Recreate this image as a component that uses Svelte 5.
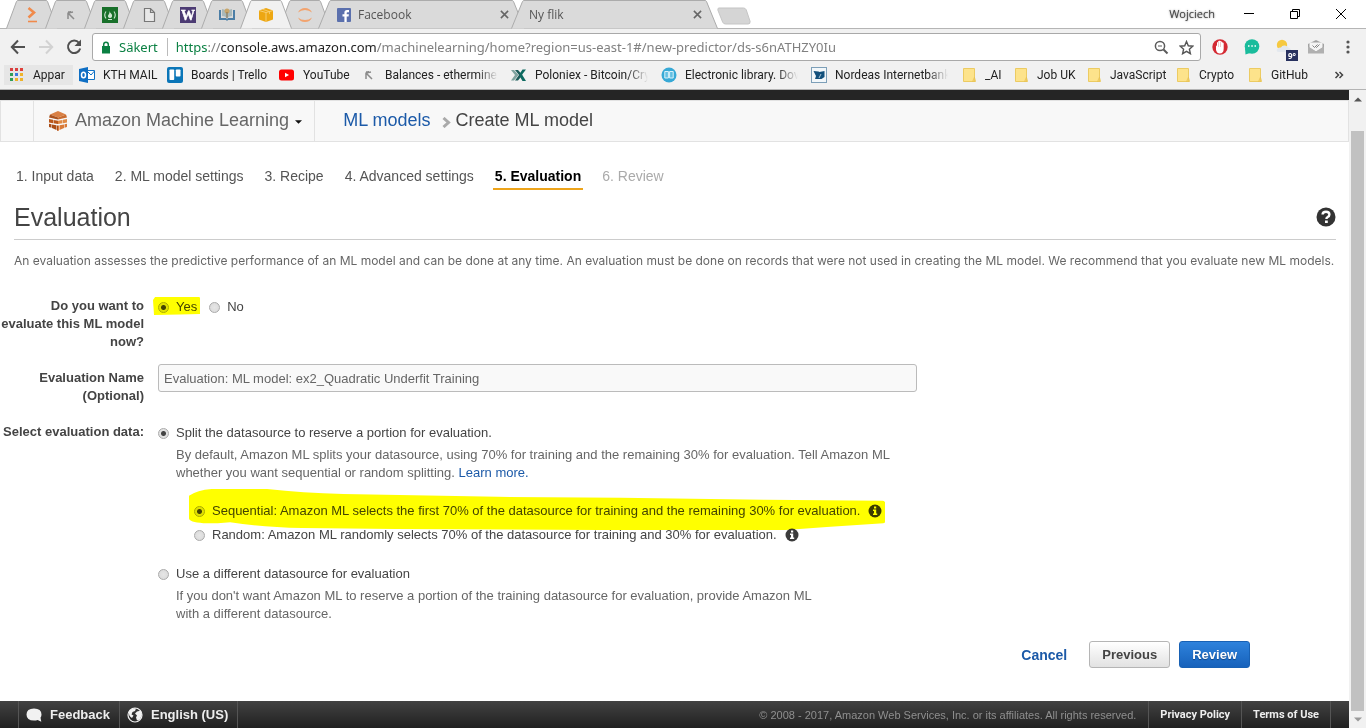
<script>
  const slimTabs = ['prompt', 'pick', 'fcc', 'page', 'w', 'book', 'aws', 'ring'];
  const wideTabs = [
    { title: 'Facebook', icon: 'fb' },
    { title: 'Ny flik', icon: null }
  ];
  const bookmarks = [
    { label: 'Appar', icon: 'apps' },
    { label: 'KTH MAIL', icon: 'outlook' },
    { label: 'Boards | Trello', icon: 'trello' },
    { label: 'YouTube', icon: 'youtube' },
    { label: 'Balances - ethermine', icon: 'pick', fade: true },
    { label: 'Poloniex - Bitcoin/Cry', icon: 'poloniex', fade: true },
    { label: 'Electronic library. Dov', icon: 'library', fade: true },
    { label: 'Nordeas Internetbank', icon: 'nordea', fade: true },
    { label: '_AI', icon: 'folder' },
    { label: 'Job UK', icon: 'folder' },
    { label: 'JavaScript', icon: 'folder' },
    { label: 'Crypto', icon: 'folder' },
    { label: 'GitHub', icon: 'folder' }
  ];
  const dots = ['#d93f3f', '#d93f3f', '#e0403a', '#2f9e58', '#3d7be0', '#eeb32a', '#2f9e58', '#eeb32a', '#eeb32a'];
  const steps = ['1. Input data', '2. ML model settings', '3. Recipe', '4. Advanced settings', '5. Evaluation', '6. Review'];

  let evaluate = $state('yes');
  let source = $state('split');
  let order = $state('sequential');
  let evalName = $state('Evaluation: ML model: ex2_Quadratic Underfit Training');
</script>

{#snippet favicon(name)}
  <svg class="favicon" viewBox="0 0 16 16" aria-hidden="true">
    {#if name === 'prompt'}
      <path d="M4.500 1l5.500 4.600-5.500 4.800" fill="none" stroke="#f08a4b" stroke-width="2.600" />
      <path d="M4 14.500h9" stroke="#f08a4b" stroke-width="1.600" />
    {:else if name === 'pick'}
      <path d="M5 12V6l5-1M5 6l6 6M5 5h3" fill="none" stroke="#8b8b8b" stroke-width="1.500" />
    {:else if name === 'fcc'}
      <rect width="16" height="16" fill="#18702a" />
      <path d="M4 4.500q-2.500 3.500 0 7M12 4.500q2.500 3.500 0 7" fill="none" stroke="#cfe6d2" stroke-width="1.100" />
      <path d="M7.500 4q.5 1.500 1.800 2.700Q10.500 8 10 9.500 9.500 11 8 11t-2-1.500Q5.800 8 7 7 7.800 5.500 7.500 4z" fill="#cfe6d2" />
      <path d="M6 12.500h4" stroke="#cfe6d2" />
    {:else if name === 'page'}
      <path d="M3.500 1.500h6l4 4v9h-10zM9.500 1.500v4h4" fill="#e8e8e8" stroke="#777" stroke-width="1.200" />
    {:else if name === 'w'}
      <rect width="16" height="16" fill="#4c3b73" />
      <text x="8" y="13" text-anchor="middle" font-family="Liberation Serif, serif" font-size="14" font-weight="700" fill="#fff" stroke="#fff" stroke-width=".5">W</text>
    {:else if name === 'book'}
      <path d="M0 3h2v8h5l1 1 1-1h5V3h2v10H9l-1 1-1-1H0z" fill="#4b7ea6" />
      <path d="M3 2q3 0 5 3v6Q6 9 3 9zM13 2q-3 0-5 3v6q2-2 5-2z" fill="#a8b9bb" />
      <circle cx="8" cy="4" r="2.500" fill="#c8a66c" /><path d="M8 5v6" stroke="#806c4a" />
    {:else if name === 'aws'}
      <path d="M1 3.500L8 1l7 2.500v9L8 15l-7-2.500z" fill="#eda712" />
      <path d="M1 3.500L8 5.500l7-2M8 5.500V15" fill="none" stroke="#f9d27a" stroke-width=".9" />
      <path d="M4.500 2.300l7 2.300v2.500" fill="none" stroke="#f9d27a" stroke-width=".8" />
    {:else if name === 'ring'}
      <path d="M1 5.500Q3 1 8 1t7 4.500Q12 3 8 3T1 5.500zM1 10.500Q3 15 8 15t7-4.500Q12 13 8 13t-7-2.500z" fill="#f2a36e" />
    {:else if name === 'fb'}
      <rect x="1" y="1" width="14" height="14" rx="1" fill="#5b70ad" />
      <path d="M8.400 15V9.500H6.500V7.300h1.900V5.700Q8.400 3 11 3h2v2.200h-1.400q-.9 0-.9.9v1.200h2.200L12.600 9.500h-1.900V15z" fill="#fff" />
    {:else if name === 'apps'}
      {#each dots as c, i}
        <rect x={1 + (i % 3) * 5} y={1 + Math.floor(i / 3) * 5} width="3" height="3" fill={c} />
      {/each}
    {:else if name === 'outlook'}
      <path d="M8 3.500h7.500v9H8z" fill="#fff" stroke="#1272c4" />
      <path d="M8 4l4 4 3.500-4" fill="none" stroke="#1272c4" />
      <path d="M0 2l9-2v16l-9-2z" fill="#0f6fc4" />
      <ellipse cx="4.500" cy="8" rx="2" ry="2.800" fill="none" stroke="#fff" stroke-width="1.500" />
    {:else if name === 'trello'}
      <rect width="16" height="16" rx="2" fill="#0b76b8" />
      <rect x="2.500" y="2.500" width="4.700" height="10.500" rx=".8" fill="#fff" />
      <rect x="8.800" y="2.500" width="4.700" height="7" rx=".8" fill="#fff" />
    {:else if name === 'youtube'}
      <rect x="0" y="2.500" width="15" height="11" rx="2.500" fill="#f00" />
      <path d="M6 5.700v4.600L10 8z" fill="#fff" />
    {:else if name === 'poloniex'}
      <path d="M0 3h3l4.500 5L3 13.500H0L4 8z" fill="#7fa39f" /><path d="M4 3h3l4.500 5L7 13.500H4L8 8z" fill="#1d5c5a" />
      <path d="M15 2.500h-3.500L8.500 7l1.500 2zM8.500 9l3 5H15l-4-6.500z" fill="#0d6a60" />
    {:else if name === 'library'}
      <circle cx="8" cy="8" r="7.500" fill="#37a9d6" />
      <path d="M3.800 4.500h3.600v6.500H3.800zM8.600 4.500h3.600v6.500H8.600z" fill="#63bfe2" stroke="#d9f1fa" />
    {:else if name === 'nordea'}
      <rect x=".5" y=".5" width="15" height="15" fill="#f2f7fa" stroke="#7d9fb8" />
      <path d="M2.500 4l5 .5 1 .5 5-1v6l-3 2H4l1-3z" fill="#12507c" /><path d="M10 7l-2 4" stroke="#a9c6d8" />
    {:else if name === 'folder'}
      <path d="M2.500 1.500h11v9l1 4h-12z" fill="#fde38b" stroke="#eccb62" />
      <path d="M13.500 10v4.500h-2z" fill="#f7d46a" stroke="#e6bf50" stroke-width=".6" />
    {/if}
  </svg>
{/snippet}

{#snippet info()}
  <button class="bare info" aria-label="More information">
    <svg viewBox="0 0 14 14"><circle cx="7" cy="7" r="6.500" fill="#3b3b3b" /><path d="M6 2.500h2.200v1.900H6zM5 5.600h3.200v4h1v1.400H5V9.600h1V7H5z" fill="#fff" /></svg>
  </button>
{/snippet}

<div class="window">
  <header class="chrome">
    <div class="tabstrip">
      {#each slimTabs as t}
        <div class="tab slim" class:active={t === 'aws'}>
          <svg class="shape" viewBox="0 0 52 29" preserveAspectRatio="none"><path d="M.5 28.500L10.500 1.500Q11 .5 12 .5h28q1 0 1.500 1l10 27" /></svg>
          {@render favicon(t)}
        </div>
      {/each}
      {#each wideTabs as t}
        <div class="tab wide">
          <svg class="shape" viewBox="0 0 207 29" preserveAspectRatio="none"><path d="M.5 28.500L11.500 1.500Q12 .5 13 .5h181q1 0 1.500 1l11 27" /></svg>
          {#if t.icon}{@render favicon(t.icon)}{/if}
          <span class="tab-title">{t.title}</span>
          <button class="bare close" aria-label="Close tab"><svg viewBox="0 0 10 10"><path d="M1 1l8 8M9 1L1 9" stroke="#666" stroke-width="1.700" /></svg></button>
        </div>
      {/each}
      <button class="bare newtab" aria-label="New tab"><svg viewBox="0 0 36 18"><path d="M2 .5h26q2 0 3 2l4 12q.5 3-2 3H9q-2 0-3-2L1 3Q.5.500 2 .5z" fill="#d5d5d5" stroke="#c4c4c4" /></svg></button>
      <div class="controls">
        <span class="profile">Wojciech</span>
        <button class="bare" aria-label="Minimize"><svg viewBox="0 0 12 12"><path d="M1 5.500h10" stroke="#000" /></svg></button>
        <button class="bare" aria-label="Restore"><svg viewBox="0 0 12 12"><path d="M1.500 3.500h7v7h-7zM3.500 3V1.500h7v7H9" fill="none" stroke="#000" /></svg></button>
        <button class="bare" aria-label="Close"><svg viewBox="0 0 12 12"><path d="M1 1l10 10M11 1L1 11" stroke="#000" /></svg></button>
      </div>
    </div>

    <div class="toolbar">
      <button class="bare nav" aria-label="Back"><svg viewBox="0 0 16 16"><path d="M15 8H2M8 1.500L1.800 8 8 14.500" fill="none" stroke="#505050" stroke-width="2" /></svg></button>
      <button class="bare nav" aria-label="Forward"><svg viewBox="0 0 16 16"><path d="M1 8h13M8 1.500L14.200 8 8 14.500" fill="none" stroke="#d2d2d2" stroke-width="2" /></svg></button>
      <button class="bare nav" aria-label="Reload"><svg viewBox="0 0 16 16"><path d="M13 3.800A6.200 6.200 0 1 0 14.200 9.500" fill="none" stroke="#505050" stroke-width="2" /><path d="M15 .5v6.500H8.500z" fill="#505050" /></svg></button>
      <div class="omnibox">
        <svg class="lock" viewBox="0 0 10 13"><path d="M1 5h8v7.500H1z" fill="#0b8043" /><path d="M2.700 5.500V3.500a2.300 2.300 0 0 1 4.600 0v2" fill="none" stroke="#0b8043" stroke-width="1.500" /></svg>
        <span class="secure">Säkert</span>
        <span class="url"><b>https</b><i>://</i>console.aws.amazon.com<i>/machinelearning/home?region=us-east-1#/new-predictor/ds-s6nATHZY0Iu</i></span>
        <button class="bare mini" aria-label="Zoom"><svg viewBox="0 0 15 15"><circle cx="6" cy="6" r="4.600" fill="none" stroke="#5a5a5a" stroke-width="1.500" /><path d="M9.500 9.500l4 4" stroke="#5a5a5a" stroke-width="2" /><path d="M4 6h4" stroke="#5a5a5a" /></svg></button>
        <button class="bare mini" aria-label="Bookmark"><svg viewBox="0 0 15 15"><path d="M7.500 1.500l1.800 4.300 4.500.4-3.400 3 1 4.500-3.900-2.400-3.900 2.400 1-4.500-3.400-3 4.500-.4z" fill="none" stroke="#555" stroke-width="1.400" /></svg></button>
      </div>
      <div class="extensions">
        <button class="bare" aria-label="Ad blocker"><svg viewBox="0 0 16 16"><circle cx="8" cy="8" r="7.700" fill="#d42a33" /><path d="M4 7.500q0-1 1-1V4q0-1 1-1 .5-1.500 1.500-1.200Q8.500 1.500 9 2.500q1.200-.3 1.300 1 1.400-.3 1.400 1v5q0 5-4 5Q5 14.500 4 11z" fill="#fff" /><path d="M6.500 3v5M8.500 3v5" stroke="#e8a0a2" stroke-width=".6" /></svg></button>
        <button class="bare" aria-label="Chat"><svg viewBox="0 0 16 16"><circle cx="8" cy="7.500" r="7.300" fill="#1abc9c" /><path d="M1 9l.5 6.500L6 14z" fill="#1abc9c" /><path d="M4 7h1.500M7.300 7h1.500M10.500 7H12" stroke="#fff" stroke-width="1.500" /></svg></button>
        <button class="bare weather" aria-label="Weather"><svg viewBox="0 0 16 16"><circle cx="6" cy="6" r="5.200" fill="#f6c940" /><path d="M3 13Q0 13 1 10.500 2 8 5 8.500 6 6 9 6.500T13 9q3 1 2 4z" fill="#e3e8ee" /></svg><span class="badge">9°</span></button>
        <button class="bare" aria-label="Mail tracker"><svg viewBox="0 0 16 16"><path d="M0 5l8-4 8 4v9H0z" fill="#a3a3a3" /><path d="M1.500 3.500h13v5L8 12.500l-6.500-4z" fill="#f4f4f4" /><path d="M0 7.500l8 5 8-5v7H0z" fill="#b0b0b0" /><path d="M4.500 6.500l2 2 3-3M7.500 7.500l1 1 3-3" fill="none" stroke="#777" stroke-width=".9" /></svg></button>
        <button class="bare" aria-label="Menu"><svg viewBox="0 0 16 16"><circle cx="8" cy="3" r="1.600" fill="#555" /><circle cx="8" cy="8" r="1.600" fill="#555" /><circle cx="8" cy="13" r="1.600" fill="#555" /></svg></button>
      </div>
    </div>

    <nav class="bookmarks" aria-label="Bookmarks">
      {#each bookmarks as b}
        <a href="#top" class="bookmark" class:shaded={b.icon === 'apps'} class:fade={b.fade}>
          {@render favicon(b.icon)}<span>{b.label}</span>
        </a>
      {/each}
      <button class="bare more" aria-label="More bookmarks"><svg viewBox="0 0 10 8"><path d="M1.500 1l3 3-3 3M5.500 1l3 3-3 3" fill="none" stroke="#444" stroke-width="1.500" /></svg></button>
    </nav>
  </header>

  <div class="viewport">
    <div class="page">
      <div class="darkbar"></div>
      <nav class="crumbs" aria-label="Breadcrumb">
        <button class="bare service">
          <svg class="cube" viewBox="0 0 20 20">
            <path d="M10 0l8 3.500L10 6.500 2 3.500z" fill="#d98045" /><path d="M2 3.500l8 3v2L1 6.500z" fill="#a9521f" /><path d="M18 3.500l-8 3v2l9-2z" fill="#c96c2f" />
            <path d="M1 8l4 .8v3.400l-4-.7zM5.500 9l4.500.7V13l-4.500-.7z" fill="#b9561a" /><path d="M19 8l-4 .8v3.400l4-.7zM14.500 9l-4.500.7V13l4.500-.7z" fill="#e08a45" />
            <path d="M1 12.800l2.500.4v3.500L1 16zM4 13.400l4.500.8v4.800L4 17zM9 14.400l1 .2V20l-1-.4z" fill="#a94d17" /><path d="M19 12.800l-2.500.4v3.500l2.500-.7zM16 13.400l-4.500.8v4.800L16 17zM11 14.400l-1 .2V20l1-.4z" fill="#d97a38" />
          </svg>
          <span>Amazon Machine Learning</span>
          <svg class="caret" viewBox="0 0 8 4"><path d="M0 0h8L4 4z" fill="#111" /></svg>
        </button>
        <a href="#models">ML models</a>
        <svg class="chevron" viewBox="0 0 9 11"><path d="M1.500 1l5 4.500-5 4.500" fill="none" stroke="#aaa" stroke-width="3" /></svg>
        <span class="here">Create ML model</span>
      </nav>

      <main>
        <ol class="steps">
          {#each steps as s, i}
            <li class:current={i === 4} class:later={i === 5}>{s}</li>
          {/each}
        </ol>
        <div class="heading">
          <h1>Evaluation</h1>
          <button class="bare help" aria-label="Help"><svg viewBox="0 0 20 20"><circle cx="10" cy="10" r="9.500" fill="#333" /><path d="M6.600 7.600Q6.600 4.800 10 4.800t3.400 2.700q0 1.600-1.700 2.500-1.300.7-1.300 2" fill="none" stroke="#fff" stroke-width="2.400" /><path d="M9 13.500h2.800v2.500H9z" fill="#fff" /></svg></button>
        </div>
        <p class="intro">An evaluation assesses the predictive performance of an ML model and can be done at any time. An evaluation must be done on records that were not used in creating the ML model. We recommend that you evaluate new ML models.</p>

        <form onsubmit={(e) => e.preventDefault()}>
          <div class="row" role="radiogroup" aria-labelledby="q-eval">
            <span class="name" id="q-eval">Do you want to<br />evaluate this ML model<br />now?</span>
            <div class="field inline">
              <label class="marked"><input type="radio" name="evaluate" value="yes" bind:group={evaluate} />Yes
                <svg class="marker short" viewBox="0 0 46 18" preserveAspectRatio="none"><path d="M0 3L2 0h43l1 1v16l-20 .5L1 18z" /></svg>
              </label>
              <label><input type="radio" name="evaluate" value="no" bind:group={evaluate} />No</label>
            </div>
          </div>
          <div class="row">
            <label class="name" for="eval-name">Evaluation Name<br />(Optional)</label>
            <div class="field"><input id="eval-name" class="text" type="text" bind:value={evalName} /></div>
          </div>
          <div class="row" role="radiogroup" aria-labelledby="q-data">
            <span class="name" id="q-data">Select evaluation data:</span>
            <div class="field">
              <label><input type="radio" name="source" value="split" bind:group={source} />Split the datasource to reserve a portion for evaluation.</label>
              <p class="hint">By default, Amazon ML splits your datasource, using 70% for training and the remaining 30% for evaluation. Tell Amazon ML<br />whether you want sequential or random splitting. <a href="#learn">Learn more.</a></p>
              <div class="options">
                <div class="option marked">
                  <label><input type="radio" name="order" value="sequential" bind:group={order} />Sequential: Amazon ML selects the first 70% of the datasource for training and the remaining 30% for evaluation.</label>
                  {@render info()}
                  <svg class="marker long" viewBox="0 0 677 44" preserveAspectRatio="none"><path d="M0 7Q8 1 22 0H76Q110 4 150 5L300 8 420 9 560 11 674 12Q677 12 677 16V34L675 35 620 39 580 42 400 42 200 41 110 40Q70 39 40 34L28 35H14Q0 34 0 30z" /></svg>
                </div>
                <div class="option">
                  <label><input type="radio" name="order" value="random" bind:group={order} />Random: Amazon ML randomly selects 70% of the datasource for training and 30% for evaluation.</label>
                  {@render info()}
                </div>
              </div>
              <label><input type="radio" name="source" value="other" bind:group={source} />Use a different datasource for evaluation</label>
              <p class="hint">If you don't want Amazon ML to reserve a portion of the training datasource for evaluation, provide Amazon ML<br />with a different datasource.</p>
            </div>
          </div>
          <div class="actions">
            <a href="#cancel">Cancel</a>
            <button class="btn" type="button">Previous</button>
            <button class="btn primary" type="submit">Review</button>
          </div>
        </form>
      </main>

      <footer>
        <button class="bare foot-item"><svg viewBox="0 0 16 16"><path d="M8 1.500q7.500 0 7.500 6 0 2-1 3.300l.8 4-3.600-1.700Q10 13.600 8 13.600q-7.500 0-7.500-6t7.500-6.100z" fill="#f1f1f1" /></svg>Feedback</button>
        <button class="bare foot-item"><svg viewBox="0 0 16 16"><circle cx="8" cy="8" r="7" fill="none" stroke="#f1f1f1" stroke-width="1.200" /><path d="M2 4Q5 .5 9 1.500L8 4 5.500 5l-1 2.500 2 1L5 11Q1 9 2 4zM10 4.500l4-1 1 4-2 5-3 1-1-3 1-2-2-2z" fill="#f1f1f1" /></svg>English (US)</button>
        <span class="copyright">© 2008 - 2017, Amazon Web Services, Inc. or its affiliates. All rights reserved.</span>
        <a href="#privacy">Privacy Policy</a>
        <a href="#terms">Terms of Use</a>
      </footer>
    </div>
    <div class="scrollbar" aria-hidden="true">
      <svg viewBox="0 0 8 5"><path d="M0 4.500h8L4 .5z" fill="#555" /></svg>
      <span class="thumb"></span>
      <svg viewBox="0 0 8 5"><path d="M0 .5h8l-4 4z" fill="#999" /></svg>
    </div>
  </div>
</div>

<style>
  :global(body) { background: #fff; }
  * { box-sizing: border-box; }
  svg { display: block; flex: none; }
  p, h1, ol { margin: 0; padding: 0; }
  a { color: #1c5aa8; text-decoration: none; }
  .bare { display: flex; align-items: center; border: 0; background: none; padding: 0; font: inherit; color: inherit; }
  .window { display: flex; flex-direction: column; min-height: 100vh; font-family: "Liberation Sans", Arial, sans-serif; font-size: 13px; line-height: 18px; color: #444; }
  .favicon { width: 16px; height: 16px; }

  .chrome { background: #f1f1f1; border-bottom: 1px solid #b4b4b4; font-family: "Open Sans", "Noto Sans", sans-serif; color: #222; }
  .tabstrip { display: flex; align-items: flex-end; height: 29px; padding: 0 2px 0 6px; background: #fff; border-bottom: 1px solid #b5b5b5; }
  .tab { position: relative; display: flex; align-items: center; height: 29px; margin: 0 -13px -1px 0; flex: none; }
  .tab .favicon { position: relative; }
  .slim { width: 52px; justify-content: center; }
  .wide { width: 207px; padding: 0 11px 0 18px; margin-right: -14px; gap: 6px; }
  .shape { position: absolute; inset: 0; width: 100%; height: 100%; }
  .shape path { fill: #dadada; stroke: #ababab; }
  .active { z-index: 2; }
  .active .shape path { fill: #f1f1f1; }
  .tab-title { position: relative; flex: 1; font-size: 12px; color: #555; }
  .close { position: relative; width: 20px; justify-content: center; }
  .close svg { width: 9px; height: 9px; }
  .newtab { margin: 0 0 3px 13px; }
  .newtab svg { width: 34px; height: 18px; }
  .controls { display: flex; align-items: center; margin-left: auto; height: 28px; }
  .controls .bare { width: 46px; justify-content: center; }
  .controls svg { width: 12px; height: 12px; }
  .profile { margin-right: 11px; font-size: 11px; color: #444; text-shadow: 0 0 2px #777; }

  .toolbar { display: flex; align-items: center; height: 36px; padding: 0 10px 0 10px; }
  .nav { margin-right: 12px; }
  .nav svg { width: 16px; height: 16px; }
  .omnibox { display: flex; align-items: center; flex: 1; min-width: 0; height: 28px; margin-left: -2px; padding: 0 6px 0 8px; border: 1px solid #a9a9a9; border-radius: 3px; background: #fff; font-family: "Noto Sans", "Open Sans", sans-serif; font-size: 13px; }
  .lock { width: 10px; height: 13px; }
  .secure { margin-left: 8px; padding-right: 9px; border-right: 1px solid #bbb; color: #0b8043; }
  .url { flex: 1; min-width: 0; margin-left: 8px; overflow: hidden; white-space: nowrap; }
  .url b { font-weight: 400; color: #0b8043; }
  .url i { font-style: normal; color: #808080; }
  .mini { margin-left: 10px; }
  .mini svg { width: 15px; height: 15px; }
  .extensions { display: flex; gap: 16px; margin-left: 11px; }
  .extensions svg { width: 16px; height: 16px; }
  .weather { position: relative; }
  .badge { position: absolute; right: -6px; bottom: -6px; width: 12px; height: 11px; background: #27305e; color: #fff; font-size: 8px; font-weight: 700; line-height: 11px; text-align: center; }

  .bookmarks { display: grid; grid-template-columns: 75px 88px 112px 82px 150px 150px 150px 150px 52px 73px 89px 72px 1fr auto; height: 24px; padding-left: 4px; align-items: start; font-family: Roboto, "Open Sans", sans-serif; }
  .bookmark { display: flex; align-items: center; gap: 8px; height: 20px; white-space: nowrap; font-size: 12px; color: #222; }
  .shaded { margin-right: 6px; padding-left: 5px; background: #e6e6e6; }
  .fade { margin-right: 13px; mask-image: linear-gradient(to right, #000 85%, transparent); }
  .more { height: 20px; margin-right: 22px; }
  .more svg { width: 10px; height: 8px; }

  .viewport { display: flex; flex: 1; }
  .page { display: flex; flex-direction: column; flex: 1; min-width: 0; }
  .darkbar { height: 10px; background: #252525; }
  .crumbs { display: flex; align-items: center; height: 42px; padding: 0 0 3px 33px; background: #f8f8f8; border: 1px solid #e2e2e2; font-size: 18px; line-height: 24px; }
  .service { height: 41px; margin: 0 28px -3px -1px; padding: 0 12px 3px 14px; border: 1px solid #e2e2e2; border-width: 0 1px; color: #666; }
  .cube { width: 20px; height: 20px; margin: 3px 7px 0 0; }
  .caret { width: 7px; height: 4px; margin: 5px 0 0 6px; }
  .chevron { width: 9px; height: 11px; margin: 5px 5px 0 11px; }
  .here { color: #444; }

  .steps { display: flex; gap: 17px; padding: 24px 14px 0; list-style: none; font-size: 14px; line-height: 20px; color: #555; }
  .steps li { padding: 0 2px 2px; border-bottom: 2px solid transparent; }
  .steps .current { border-color: #eda41b; color: #000; font-weight: 700; }
  .steps .later { color: #aaa; }
  .heading { display: flex; align-items: center; justify-content: space-between; height: 50px; margin: 0 13px 0 14px; padding-top: 4px; border-bottom: 1px solid #ccc; }
  h1 { font-size: 25px; font-weight: 400; line-height: 32px; color: #444; }
  .help svg { width: 20px; height: 20px; }
  .intro { margin: 12px 13px 0 14px; color: #666; font-family: Inter, "Liberation Sans", sans-serif; font-size: 12px; }

  form { padding-top: 27px; }
  .row { display: flex; margin-bottom: 18px; }
  .name { width: 144px; flex: none; text-align: right; white-space: nowrap; font-weight: 700; color: #444; }
  .field { flex: 1; min-width: 0; padding-left: 14px; }
  .inline { display: flex; align-items: flex-start; gap: 12px; }
  .field label { display: flex; align-items: center; gap: 7px; width: fit-content; padding-top: 1px; color: #444; }
  input[type="radio"] { appearance: none; flex: none; width: 11px; height: 11px; margin: 1px 0 0; border: 1px solid #aaa; border-radius: 50%; background: radial-gradient(circle, #e6e6e6, #d8d8d8); }
  input[type="radio"]:checked { background: radial-gradient(circle, #444 0 2px, #e2e2e2 3px); }
  .text { display: block; width: 64%; max-width: 759px; height: 28px; margin-top: -5px; padding: 0 5px; border: 1px solid #bbb; border-radius: 3px; background: #f9f9f9; font: inherit; color: #666; }
  .hint { margin: 4px 0 0 18px; color: #666; }
  .options { display: flex; flex-direction: column; gap: 5px; margin: 19px 0 20px 36px; }
  .option { display: flex; align-items: center; gap: 8px; width: fit-content; }
  .info svg { width: 14px; height: 14px; }
  .marked { position: relative; }
  .marker { position: absolute; pointer-events: none; mix-blend-mode: multiply; }
  .marker path { fill: #ff0; }
  .short { left: -5px; top: 0; width: calc(100% + 8px); height: 18px; }
  .long { left: -5px; top: -12px; width: calc(100% + 8px); height: 43px; }
  .actions { display: flex; align-items: center; justify-content: flex-end; margin-right: 99px; font-size: 14px; font-weight: 700; }
  .actions a { margin-right: 22px; }
  .btn { height: 27px; padding: 0 12px; border: 1px solid #b5b5b5; border-radius: 3px; background: linear-gradient(#fff, #e2e2e2); font: inherit; font-size: 13px; color: #444; }
  .primary { margin-left: 9px; border-color: #1861b4; background: linear-gradient(#2e82dc, #1762bb); color: #fff; text-shadow: 0 1px 1px #0f4280; }

  footer { display: flex; align-items: center; height: 27px; margin-top: auto; padding: 0 18px; background: linear-gradient(#424242, #202020); color: #eee; font-size: 11px; font-weight: 700; }
  .foot-item { gap: 8px; height: 27px; padding: 0 9px 0 7px; border-left: 1px solid #555; font-size: 13px; }
  .foot-item:nth-child(2) { border-right: 1px solid #555; }
  .foot-item svg { width: 16px; height: 16px; }
  .copyright { margin-left: auto; padding-right: 12px; color: #8f8f8f; font-weight: 400; }
  footer a { height: 27px; padding: 0 11px; border-left: 1px solid #555; font-family: Roboto, "Liberation Sans", sans-serif; line-height: 27px; color: #eee; }
  footer a:last-child { border-right: 1px solid #555; }

  .scrollbar { display: flex; flex-direction: column; align-items: center; width: 17px; padding: 7px 0 6px; background: #f1f1f1; }
  .scrollbar svg { width: 8px; height: 5px; }
  .thumb { flex: 1; width: 13px; margin: 29px 0 6px; background: #c1c1c1; }
</style>
